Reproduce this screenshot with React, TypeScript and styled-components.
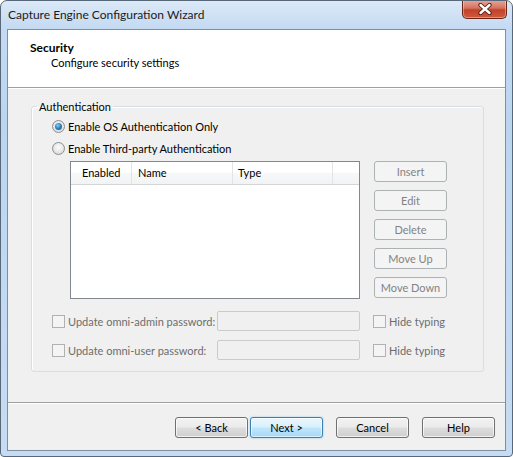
import React, { ReactElement } from 'react'
import styled, { createGlobalStyle, css } from 'styled-components'

const GlobalStyle = createGlobalStyle`
  html, body {
    margin: 0;
    padding: 0;
    background: #ffffff;
  }
  body {
    font-family: Lato, 'Segoe UI', 'Noto Sans', sans-serif;
    font-size: 11px;
    color: #000;
  }
`

const Window = styled.div`
  width: 513px;
  height: 457px;
  box-sizing: border-box;
  border: 1px solid #56687a;
  border-radius: 7px 7px 4px 4px;
  background: linear-gradient(180deg, #dce9f7 0, #c3daf2 28px, #bcd5ef 120px, #c6dcf3 100%);
  padding: 0 6px 5px 6px;
  display: flex;
  flex-direction: column;
  overflow: hidden;
`

const TitleBar = styled.div`
  height: 28px;
  display: flex;
  justify-content: space-between;
  align-items: flex-start;
`

const Title = styled.div`
  font-size: 12px;
  line-height: 28px;
  color: #1b1b1b;
  padding-left: 1px;
`

const CloseButton = styled.div`
  width: 45px;
  height: 19px;
  margin-top: -1px;
  margin-right: -1px;
  box-sizing: border-box;
  border: 1px solid #6b2418;
  border-top: none;
  border-radius: 0 0 5px 5px;
  background: linear-gradient(180deg, #e5a89b 0, #d5735f 45%, #c2412a 55%, #cf5a3e 100%);
  box-shadow: inset 0 0 0 1px rgba(255, 255, 255, 0.35);
  display: flex;
  align-items: center;
  justify-content: center;
`

const Client = styled.div`
  flex: 1;
  border: 1px solid #7d8fa3;
  background: #f0f0f0;
  display: flex;
  flex-direction: column;
`

const Header = styled.div`
  height: 58px;
  box-sizing: border-box;
  background: #ffffff;
  padding: 10px 0 0 22px;
  border-bottom: 1px solid #a0a0a0;
  box-shadow: 0 1px 0 #ffffff;
  line-height: 15px;
`

const HeaderTitle = styled.div`
  font-weight: bold;
  font-size: 12px;
`

const HeaderSubtitle = styled.div`
  padding-left: 21px;
`

const Body = styled.div`
  flex: 1;
  padding: 11px 21px 0 23px;
`

const GroupBox = styled.fieldset`
  margin: 0;
  padding: 5px 0 11px 20px;
  border: 1px solid #d5dfe5;
  border-radius: 3px;
  box-shadow: inset 1px 1px 0 #ffffff;
  min-width: 0;
`

const GroupLabel = styled.legend`
  padding: 0 2px;
  margin-left: -15px;
  line-height: 15px;
`

const OptionRow = styled.label`
  display: flex;
  align-items: center;
  gap: 3px;
  height: 15px;
  margin-bottom: 7px;
  white-space: nowrap;
`

const Radio = styled.span<{ $checked?: boolean }>`
  position: relative;
  width: 13px;
  height: 13px;
  box-sizing: border-box;
  border-radius: 50%;
  border: 1px solid #8b8f93;
  background: radial-gradient(circle at 50% 40%, #fdfdfd 0, #e6e6e6 55%, #cfcfcf 100%);
  ${(p) =>
    p.$checked &&
    css`
      &::after {
        content: '';
        position: absolute;
        left: 2px;
        top: 2px;
        width: 7px;
        height: 7px;
        border-radius: 50%;
        background: radial-gradient(circle at 40% 35%, #8fd0f6 0, #2f86c4 45%, #164b78 100%);
      }
    `}
`

const ListArea = styled.div`
  display: flex;
  gap: 14px;
  margin: -2px 0 0 18px;
`

const ListView = styled.div`
  width: 290px;
  height: 138px;
  box-sizing: border-box;
  border: 1px solid #828790;
  background: #ffffff;
`

const ListHeader = styled.div`
  display: grid;
  grid-template-columns: 61px 101px 100px 1fr;
  height: 22px;
  border-bottom: 1px solid #d5d5d5;
  background: linear-gradient(180deg, #ffffff 0, #ffffff 45%, #f6f7f8 55%, #f2f3f4 100%);
`

const ColumnHeader = styled.div<{ $pad: number }>`
  padding-left: ${(p) => p.$pad}px;
  line-height: 21px;
  border-right: 1px solid #e3e4e6;
  color: #000;
  &:last-child {
    border-right: none;
  }
`

const SideButtons = styled.div`
  display: flex;
  flex-direction: column;
  gap: 8px;
`

const DisabledButton = styled.div`
  width: 73px;
  height: 21px;
  box-sizing: border-box;
  border: 1px solid #adb2b5;
  border-radius: 3px;
  background: #f4f4f4;
  color: #838383;
  text-align: center;
  line-height: 19px;
`

const PasswordGrid = styled.div`
  display: grid;
  grid-template-columns: 152px 143px auto;
  column-gap: 13px;
  row-gap: 9px;
  margin-top: 12px;
`

const CheckLabel = styled.label`
  display: flex;
  align-items: center;
  gap: 3px;
  height: 20px;
  color: #6d6d6d;
  white-space: nowrap;
`

const CheckBox = styled.span`
  width: 13px;
  height: 13px;
  flex: none;
  box-sizing: border-box;
  border: 1px solid #b1b1b1;
  background: #f4f4f4;
`

const TextInput = styled.div`
  height: 20px;
  box-sizing: border-box;
  border: 1px solid #c9cbcd;
  border-radius: 2px;
  background: #f0f0f0;
`

const Footer = styled.div`
  height: 48px;
  box-sizing: border-box;
  border-top: 1px solid #a0a0a0;
  box-shadow: inset 0 1px 0 #ffffff;
  padding: 14px 10px 0 0;
  display: flex;
  justify-content: flex-end;
  gap: 13px;
`

const NavGroup = styled.div`
  display: flex;
  gap: 2px;
`

const PushButton = styled.div<{ $default?: boolean }>`
  width: 73px;
  height: 21px;
  box-sizing: border-box;
  border: 1px solid #707070;
  border-radius: 3px;
  background: linear-gradient(180deg, #f2f2f2 0, #ebebeb 48%, #dddddd 52%, #cfcfcf 100%);
  box-shadow: inset 0 0 0 1px rgba(255, 255, 255, 0.7);
  text-align: center;
  line-height: 19px;
  ${(p) =>
    p.$default &&
    css`
      border-color: #3c7fb1;
      background: linear-gradient(180deg, #eaf6fd 0, #d9f0fc 48%, #bee6fd 52%, #a7d9f5 100%);
      box-shadow: inset 0 0 0 1px rgba(255, 255, 255, 0.6), 0 0 2px #7ec3ec;
    `}
`

function CloseGlyph(): ReactElement {
  return (
    <svg width="14" height="12" viewBox="0 0 14 12">
      <path d="M2.5 2 L11.5 10 M11.5 2 L2.5 10" stroke="#4a1a12" strokeWidth="4.2" strokeLinecap="round" />
      <path d="M2.5 2 L11.5 10 M11.5 2 L2.5 10" stroke="#ffffff" strokeWidth="2.4" strokeLinecap="round" />
    </svg>
  )
}

const sideActions = ['Insert', 'Edit', 'Delete', 'Move Up', 'Move Down']

const passwordRows = ['Update omni-admin password:', 'Update omni-user password:']

export default function App(): ReactElement {
  return (
    <>
      <GlobalStyle />
      <Window>
        <TitleBar>
          <Title>Capture Engine Configuration Wizard</Title>
          <CloseButton>
            <CloseGlyph />
          </CloseButton>
        </TitleBar>
        <Client>
          <Header>
            <HeaderTitle>Security</HeaderTitle>
            <HeaderSubtitle>Configure security settings</HeaderSubtitle>
          </Header>
          <Body>
            <GroupBox>
              <GroupLabel>Authentication</GroupLabel>
              <OptionRow>
                <Radio $checked />
                Enable OS Authentication Only
              </OptionRow>
              <OptionRow>
                <Radio />
                Enable Third-party Authentication
              </OptionRow>
              <ListArea>
                <ListView>
                  <ListHeader>
                    <ColumnHeader $pad={11}>Enabled</ColumnHeader>
                    <ColumnHeader $pad={6}>Name</ColumnHeader>
                    <ColumnHeader $pad={5}>Type</ColumnHeader>
                    <ColumnHeader $pad={0} />
                  </ListHeader>
                </ListView>
                <SideButtons>
                  {sideActions.map((a) => (
                    <DisabledButton key={a}>{a}</DisabledButton>
                  ))}
                </SideButtons>
              </ListArea>
              <PasswordGrid>
                {passwordRows.map((r) => (
                  <React.Fragment key={r}>
                    <CheckLabel>
                      <CheckBox />
                      {r}
                    </CheckLabel>
                    <TextInput />
                    <CheckLabel>
                      <CheckBox />
                      Hide typing
                    </CheckLabel>
                  </React.Fragment>
                ))}
              </PasswordGrid>
            </GroupBox>
          </Body>
          <Footer>
            <NavGroup>
              <PushButton>&lt; Back</PushButton>
              <PushButton $default>Next &gt;</PushButton>
            </NavGroup>
            <PushButton>Cancel</PushButton>
            <PushButton>Help</PushButton>
          </Footer>
        </Client>
      </Window>
    </>
  )
}
